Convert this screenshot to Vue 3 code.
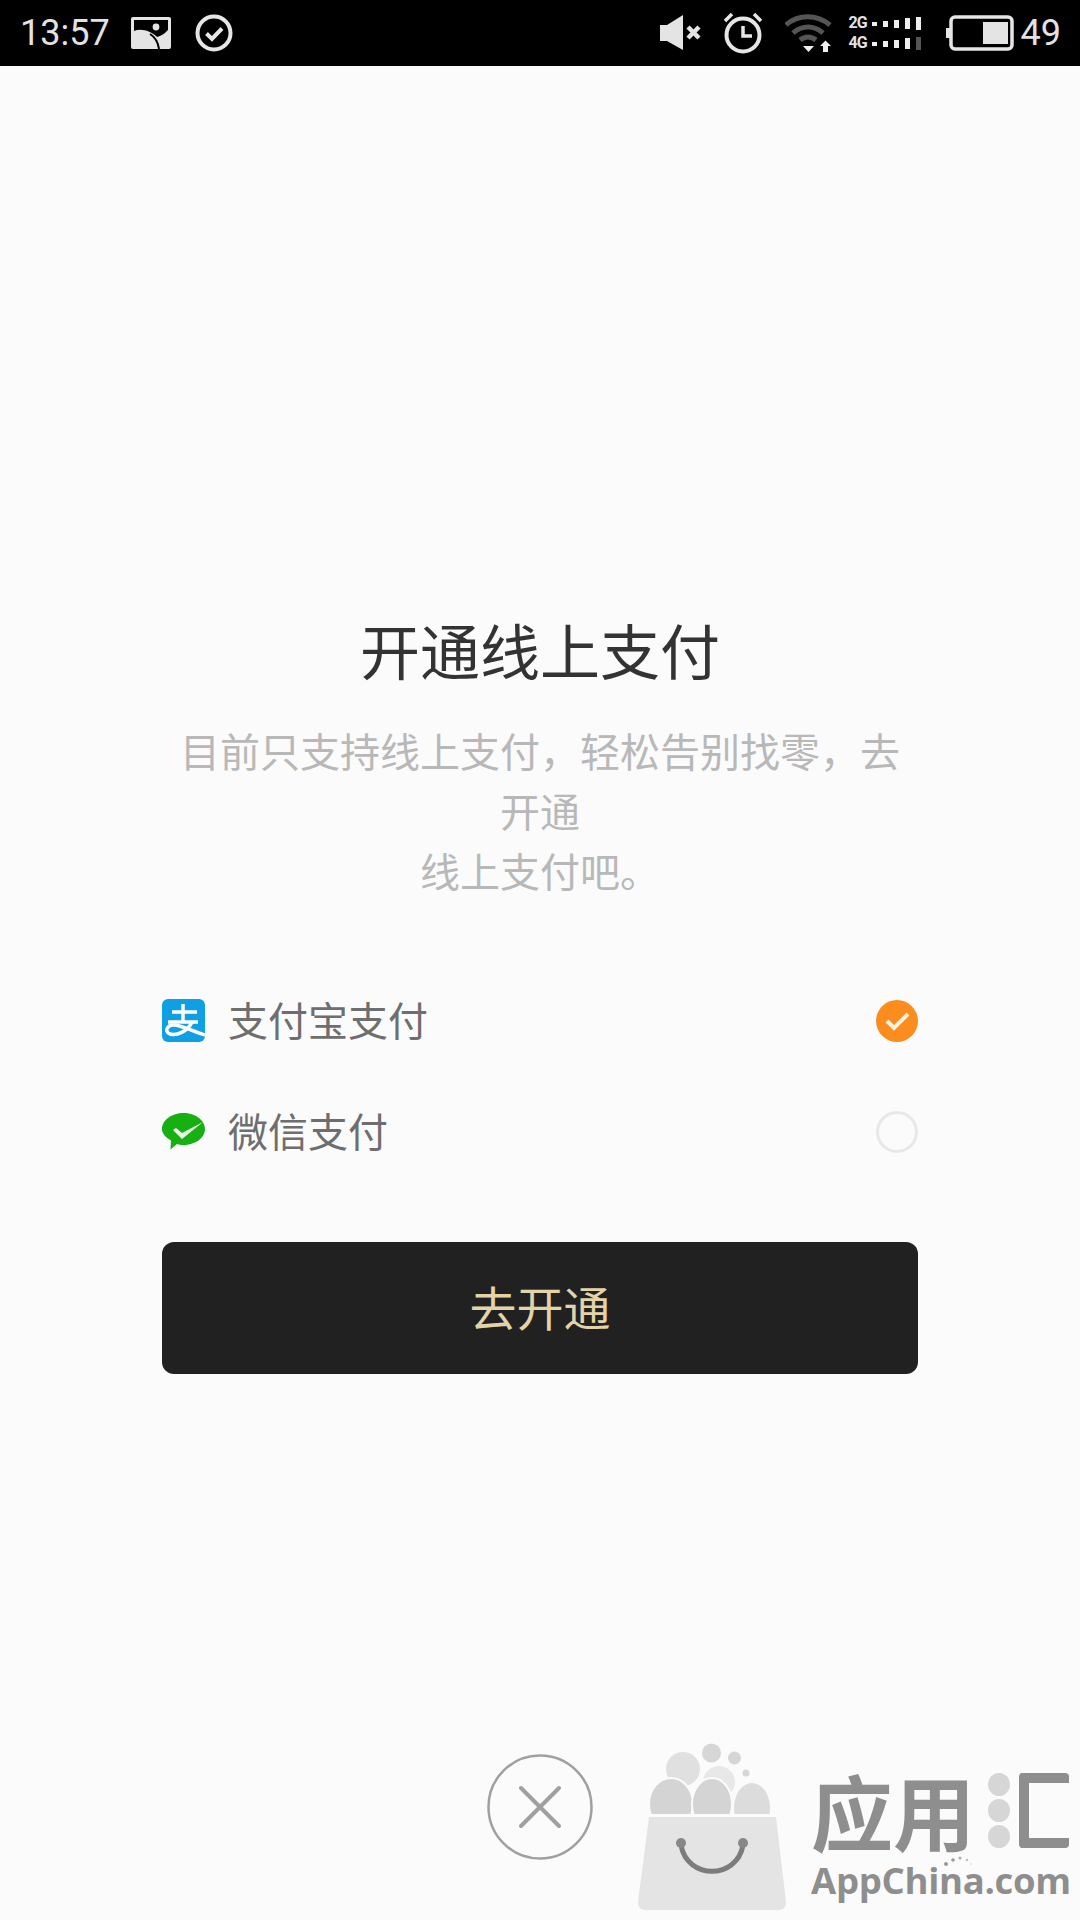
<script setup>
const title = '开通线上支付'
const desc = ['目前只支持线上支付，轻松告别找零，去开通', '线上支付吧。']
const cells = [0, 1, 2, 3, 4]
</script>

<template>
  <div class="page">
    <header class="status">
      <span class="time">13:57</span>
      <svg class="ic-photo" width="40" height="32" viewBox="0 0 40 32">
        <rect width="40" height="32" rx="2" fill="#e4e4e4" />
        <path d="M3 3H37V13C33 17 30 19 26 20C20 14 10 11 3 14Z" fill="#000" />
        <circle cx="25" cy="10" r="3.400" fill="#e4e4e4" />
        <path d="M19 17C24 20 27 25 28 32" stroke="#000" stroke-width="2" fill="none" />
      </svg>
      <svg class="ic-done" width="40" height="40" viewBox="0 0 40 40">
        <circle cx="20" cy="20" r="16.500" fill="none" stroke="#e6e6e6" stroke-width="4" />
        <path d="M12.500 20.500L18 26L28 15.500" fill="none" stroke="#e6e6e6" stroke-width="4" />
      </svg>
      <span class="spacer"></span>
      <svg class="ic-mute" width="42" height="36" viewBox="0 0 42 36">
        <path d="M0 10H7L23 0V35L7 26H0Z" fill="#e4e4e4" />
        <path d="M28 12L39 23M39 12L28 23" stroke="#e4e4e4" stroke-width="4.500" />
      </svg>
      <svg class="ic-alarm" width="42" height="42" viewBox="0 0 42 42">
        <circle cx="21" cy="23" r="16.500" fill="none" stroke="#e6e6e6" stroke-width="4" />
        <path d="M21 14V24H30" fill="none" stroke="#e6e6e6" stroke-width="3.500" />
        <path d="M3 9L10 2M39 9L32 2" stroke="#e6e6e6" stroke-width="3.500" />
      </svg>
      <svg class="ic-wifi" width="48" height="40" viewBox="0 0 48 40">
        <path d="M1 12C13 1 32 1 45 12" fill="none" stroke="#555" stroke-width="5" />
        <path d="M8 20C17 12 29 12 38 20" fill="none" stroke="#555" stroke-width="5" />
        <path d="M15 27C20 23 26 23 31 27" fill="none" stroke="#555" stroke-width="5" />
        <path d="M18 33H29L23.500 39Z" fill="#f0f0f0" />
        <path d="M35 33L40.500 27.500L46 33H43V39H38V33Z" fill="#f0f0f0" />
      </svg>
      <div class="net">
        <div class="net-row">
          <span class="net-label">2G</span>
          <i v-for="n in cells" :key="n" class="cell" :class="'cell-' + n"></i>
        </div>
        <div class="net-row">
          <span class="net-label">4G</span>
          <i v-for="n in cells" :key="n" class="cell" :class="['cell-' + n, { dim: n === 4 }]"></i>
        </div>
      </div>
      <svg class="ic-batt" width="68" height="36" viewBox="0 0 68 36">
        <rect x="5" y="2" width="61" height="32" rx="4" fill="none" stroke="#e6e6e6" stroke-width="3.500" />
        <rect x="0" y="13" width="4" height="10" fill="#e6e6e6" />
        <rect x="37" y="7" width="25" height="22" fill="#e4e4e4" />
      </svg>
      <span class="level">49</span>
    </header>

    <main class="main">
      <h1 class="title">{{ title }}</h1>
      <p class="desc">
        <template v-for="line in desc" :key="line">{{ line }}<br /></template>
      </p>

      <div class="options">
        <div class="option">
          <svg class="pay-icon" width="43" height="43" viewBox="0 0 43 43">
            <rect width="43" height="43" rx="6" fill="#0f9fe3" />
            <path d="M10 13H35M21 5V23M6 23H36" stroke="#fff" stroke-width="3.500" fill="none" />
            <path d="M30 23C26 32 15 37 8 35C2 33 5 25 13 26C21 27 32 33 43 36" stroke="#fff" stroke-width="3.500" fill="none" />
          </svg>
          <span class="label">支付宝支付</span>
          <svg class="radio" width="42" height="42" viewBox="0 0 42 42">
            <circle cx="21" cy="21" r="21" fill="#fb8c1e" />
            <path d="M11 21L18 28L32 14" fill="none" stroke="#fff3e0" stroke-width="4" />
          </svg>
        </div>
        <div class="option">
          <svg class="pay-icon" width="43" height="37" viewBox="0 0 43 37">
            <path d="M21.500 0C33 0 43 7 43 16C43 25 33 32 21.500 32C19 32 17 31.700 15 31L8.500 36.500L9 27.500C3.500 24.500 0 20.500 0 16C0 7 10 0 21.500 0Z" fill="#16b012" />
            <path d="M11 17L14 15L20 20L41 9L20 26Z" fill="#e8f8e4" />
          </svg>
          <span class="label">微信支付</span>
          <svg class="radio" width="42" height="42" viewBox="0 0 42 42">
            <circle cx="21" cy="21" r="19.500" fill="none" stroke="#e8e8e8" stroke-width="3" />
          </svg>
        </div>
      </div>

      <button class="cta">去开通</button>
    </main>

    <div class="close">
      <svg width="106" height="106" viewBox="0 0 106 106">
        <circle cx="53" cy="53" r="51.500" fill="none" stroke="#a0a0a0" stroke-width="2.500" />
        <path d="M34 34L72 72M72 34L34 72" stroke="#a0a0a0" stroke-width="4" stroke-linecap="round" />
      </svg>
    </div>

    <div class="mark">
      <svg class="bag" width="150" height="170" viewBox="0 0 150 170">
        <circle cx="74.500" cy="11" r="9.500" fill="#d6d6d6" />
        <circle cx="97.500" cy="16" r="6.500" fill="#d6d6d6" />
        <circle cx="109" cy="31" r="3.500" fill="#d6d6d6" />
        <ellipse cx="46" cy="27" rx="17" ry="17" fill="#e0e0e0" />
        <ellipse cx="82" cy="40" rx="16" ry="16" fill="#e8e8e8" />
        <ellipse cx="34" cy="62" rx="22" ry="26" fill="#d4d4d4" stroke="#fbfbfb" stroke-width="2" />
        <ellipse cx="75" cy="62" rx="20" ry="26" fill="#d4d4d4" stroke="#fbfbfb" stroke-width="2" />
        <ellipse cx="115" cy="66" rx="18" ry="25" fill="#dcdcdc" />
        <path d="M0 72H150V90H0Z" fill="#fbfbfb" />
        <path d="M12 75H139L149 160Q149 168 141 168H9Q1 168 1 160Z" fill="#e4e4e4" />
        <path d="M44 103C50 138 100 138 106 103" fill="none" stroke="#7c7c7c" stroke-width="5" />
        <circle cx="44" cy="101" r="5" fill="#888" />
        <circle cx="106" cy="101" r="5" fill="#888" />
      </svg>
      <div class="brand">
        <div class="brand-top">
          <span class="brand-cn">应用</span>
          <span class="dots"><i></i><i></i><i></i></span>
          <span class="bracket"></span>
        </div>
        <svg class="spark" width="28" height="10" viewBox="0 0 28 10">
          <circle cx="2" cy="8" r="2" fill="#999" />
          <circle cx="9" cy="4" r="1.800" fill="#999" />
          <circle cx="16" cy="2" r="1.500" fill="#aaa" />
          <circle cx="23" cy="4" r="1.200" fill="#bbb" />
          <circle cx="27" cy="8" r="0.800" fill="#ccc" />
        </svg>
        <span class="brand-en">AppChina.com</span>
      </div>
    </div>
  </div>
</template>

<style scoped>
.page {
  position: relative;
  width: 1080px;
  height: 1920px;
  overflow: hidden;
  background: #fbfbfb;
  font-family: "Noto Sans CJK SC", "Noto Sans", sans-serif;
}
.status {
  display: flex;
  align-items: center;
  height: 66px;
  padding: 0 19px 0 20px;
  background: #000;
  color: #e2e2e2;
  font-family: Roboto, "Liberation Sans", sans-serif;
  font-size: 36px;
  box-sizing: border-box;
}
.time { width: 111px; }
.ic-done { margin-left: 23px; }
.spacer { flex: 1; }
.ic-alarm { margin-left: 20px; }
.ic-wifi { margin-left: 21px; }
.net {
  display: flex;
  flex-direction: column;
  gap: 6px;
  margin-left: 16px;
  width: 72px;
}
.net-row {
  display: flex;
  align-items: flex-end;
  height: 14px;
}
.net-label {
  width: 18px;
  margin-right: 5px;
  font-size: 16px;
  font-weight: 700;
  line-height: 14px;
  letter-spacing: -1px;
}
.cell {
  display: block;
  width: 5px;
  margin-right: 6px;
  background: #eee;
  align-self: flex-end;
}
.cell-0 { height: 4px; margin-bottom: 4px; }
.cell-1 { height: 6px; margin-bottom: 3px; }
.cell-2 { height: 8px; margin-bottom: 2px; }
.cell-3 { height: 11px; margin-bottom: 1px; }
.cell-4 { height: 13px; margin-right: 0; }
.cell.dim { background: #555; }
.ic-batt { margin-left: 25px; }
.level { margin-left: 7px; }

.main {
  display: flex;
  flex-direction: column;
  padding: 543px 162px 0;
}
.title {
  margin: 0;
  font-size: 60px;
  font-weight: 400;
  line-height: 80px;
  text-align: center;
  color: #333;
}
.desc {
  margin: 31px 0 0;
  font-size: 40px;
  line-height: 60px;
  text-align: center;
  color: #b8b8b8;
}
.options {
  margin-top: 65px;
  display: flex;
  flex-direction: column;
}
.option {
  display: flex;
  align-items: center;
  height: 111px;
}
.pay-icon { flex: none; }
.label {
  flex: 1;
  margin-left: 23px;
  padding-bottom: 4px;
  font-size: 40px;
  color: #6e6e6e;
}
.radio { flex: none; }
.cta {
  margin-top: 55px;
  height: 132px;
  padding: 0 0 5px;
  border: 0;
  border-radius: 12px;
  background: #212121;
  color: #e3d3a8;
  font: inherit;
  font-size: 47px;
}
.close {
  display: flex;
  justify-content: center;
  margin-top: 380px;
}
.close svg { display: block; }

.mark {
  position: absolute;
  left: 637px;
  top: 1742px;
  display: flex;
  align-items: flex-start;
}
.bag { display: block; }
.brand {
  position: relative;
  margin-left: 24px;
  width: 270px;
  padding-top: 24px;
}
.brand-top {
  display: flex;
  align-items: center;
  height: 88px;
}
.brand-cn {
  display: block;
  width: 166px;
  font-size: 82px;
  font-weight: 700;
  line-height: 88px;
  color: #8e8e8e;
  white-space: nowrap;
}
.dots {
  display: flex;
  flex-direction: column;
  gap: 3px;
  margin-left: 11px;
}
.dots i {
  display: block;
  width: 22px;
  height: 23px;
  border-radius: 50%;
  background: #d6d6d6;
}
.bracket {
  box-sizing: border-box;
  width: 50px;
  height: 75px;
  margin-left: 9px;
  border: 10px solid #8e8e8e;
  border-right: 0;
  border-radius: 4px;
}
.spark {
  position: absolute;
  left: 133px;
  top: 114px;
}
.brand-en {
  display: block;
  margin-top: 6px;
  font-family: "Open Sans", "Noto Sans", sans-serif;
  font-size: 36.500px;
  font-weight: 700;
  line-height: 40px;
  letter-spacing: -0.3px;
  color: #8e8e8e;
  white-space: nowrap;
}
</style>
